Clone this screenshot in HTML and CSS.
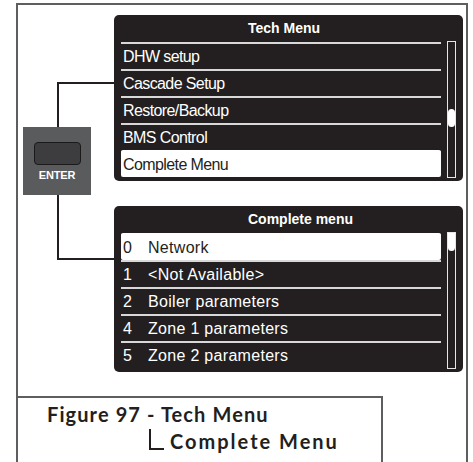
FILE: index.html
```html
<!DOCTYPE html>
<html lang="en">
  <head>
    <meta charset="UTF-8" />
    <title>Figure 97 - Tech Menu / Complete Menu</title>
    <link rel="stylesheet" href="styles.css">
  </head>
  <body>
    <div class="frame">
      <div class="diagram">
        <div class="wire-col">
          <div class="wire">
            <div class="enter-key">
              <div class="key-cap"></div>
              <span class="key-label">ENTER</span>
            </div>
          </div>
        </div>

        <div class="screens">
          <div class="panel">
            <div class="panel-title">Tech Menu</div>
            <div class="panel-body">
              <ul class="menu menu-tech">
                <li>DHW setup</li>
                <li>Cascade Setup</li>
                <li>Restore/Backup</li>
                <li>BMS Control</li>
                <li class="selected">Complete Menu</li>
              </ul>
              <div class="scrollbar"><div class="thumb thumb-mid"></div></div>
            </div>
          </div>

          <div class="panel">
            <div class="panel-title">Complete menu</div>
            <div class="panel-body">
              <ul class="menu menu-numbered">
                <li class="selected"><span class="num">0</span>Network</li>
                <li><span class="num">1</span>&lt;Not Available&gt;</li>
                <li><span class="num">2</span>Boiler parameters</li>
                <li><span class="num">4</span>Zone 1 parameters</li>
                <li><span class="num">5</span>Zone 2 parameters</li>
              </ul>
              <div class="scrollbar"><div class="thumb"></div></div>
            </div>
          </div>
        </div>
      </div>

      <div class="caption">
        <div class="caption-line">Figure 97 - Tech Menu</div>
        <div class="caption-line caption-sub">
          <span class="corner"></span>Complete Menu
        </div>
      </div>
    </div>
  </body>
</html>
```

FILE: styles.css
```css
/* Manual figure: tech menu -> complete menu */
body {
  margin: 0;
  background-color: #fff;
  color: #231f20;
  font-family: "Liberation Sans", Arial, sans-serif;
}
.frame {
  margin: 3px 0 0 16px;
  width: 448px;
  min-height: 470px;
  border: 2px solid #5d5e60;
  border-bottom: none;
}
.diagram {
  display: grid;
  grid-template-columns: 96px 349px;
}

/* connector wires + ENTER key */
.wire-col {
  padding: 77px 0 0 39px;
}
.wire {
  position: relative;
  width: 55px;
  height: 174px;
  border: 2px solid #231f20;
  border-right: none;
}
.enter-key {
  position: absolute;
  left: -36px;
  top: 43px;
  width: 68px;
  height: 68px;
  background-color: #5a5b5d;
  display: flex;
  flex-direction: column;
  align-items: center;
}
.key-cap {
  margin-top: 15px;
  width: 45px;
  height: 21px;
  background-color: #3d3d3f;
  border: 1.5px solid #1a1a1a;
  border-radius: 4px;
}
.key-label {
  margin-top: 4px;
  font-size: 11px;
  font-weight: bold;
  color: #fff;
  letter-spacing: -0.2px;
}

/* display screens */
.screens {
  padding-top: 10px;
  display: flex;
  flex-direction: column;
  gap: 25px;
}
.panel {
  width: 349px;
  height: 166px;
  box-sizing: border-box;
  padding: 0 7px 4px;
  background-color: #231f20;
  border-radius: 5px;
  color: #fff;
}
.panel-title {
  height: 27px;
  line-height: 27px;
  padding-left: 127px;
  font-size: 14px;
  font-weight: bold;
}
.panel-body {
  display: grid;
  grid-template-columns: 320px 9px;
  gap: 6px;
}
.menu {
  list-style: none;
  margin: 0;
  padding: 0;
  font-size: 16px;
}
.menu li {
  height: 25px;
  line-height: 25px;
  border-top: 2px solid #d8d8d8;
  padding-left: 2px;
  white-space: nowrap;
}
.menu-tech li {
  letter-spacing: -0.6px;
}
.menu-numbered li {
  letter-spacing: 0.3px;
}
.menu li.selected {
  background-color: #fff;
  border-top-color: #fff;
  border-radius: 2px;
  color: #231f20;
}
.num {
  display: inline-block;
  width: 25px;
}
.scrollbar {
  margin-top: -1px;
  box-sizing: border-box;
  height: 137px;
  border: 1.5px solid #e6e6e6;
}
.thumb {
  height: 18px;
  background-color: #fff;
  border-radius: 0 0 4px 4px;
}
.thumb-mid {
  margin-top: 67px;
  border-radius: 4px;
}

/* caption */
.caption {
  margin-top: 24px;
  width: 365px;
  min-height: 70px;
  border-top: 2px solid #5d5e60;
  border-right: 2px solid #5d5e60;
  padding: 3px 0 0 29px;
  box-sizing: border-box;
  font-family: Lato, "Open Sans", sans-serif;
  font-weight: bold;
  font-size: 20px;
  letter-spacing: 1.1px;
  color: #231f20;
}
.caption-line {
  height: 27px;
  line-height: 27px;
}
.caption-sub {
  display: flex;
  align-items: flex-end;
  padding-left: 102px;
  letter-spacing: 2px;
}
.corner {
  width: 13px;
  height: 19px;
  margin: 0 6px 5px 0;
  border-left: 2px solid #231f20;
  border-bottom: 2px solid #231f20;
}
```
